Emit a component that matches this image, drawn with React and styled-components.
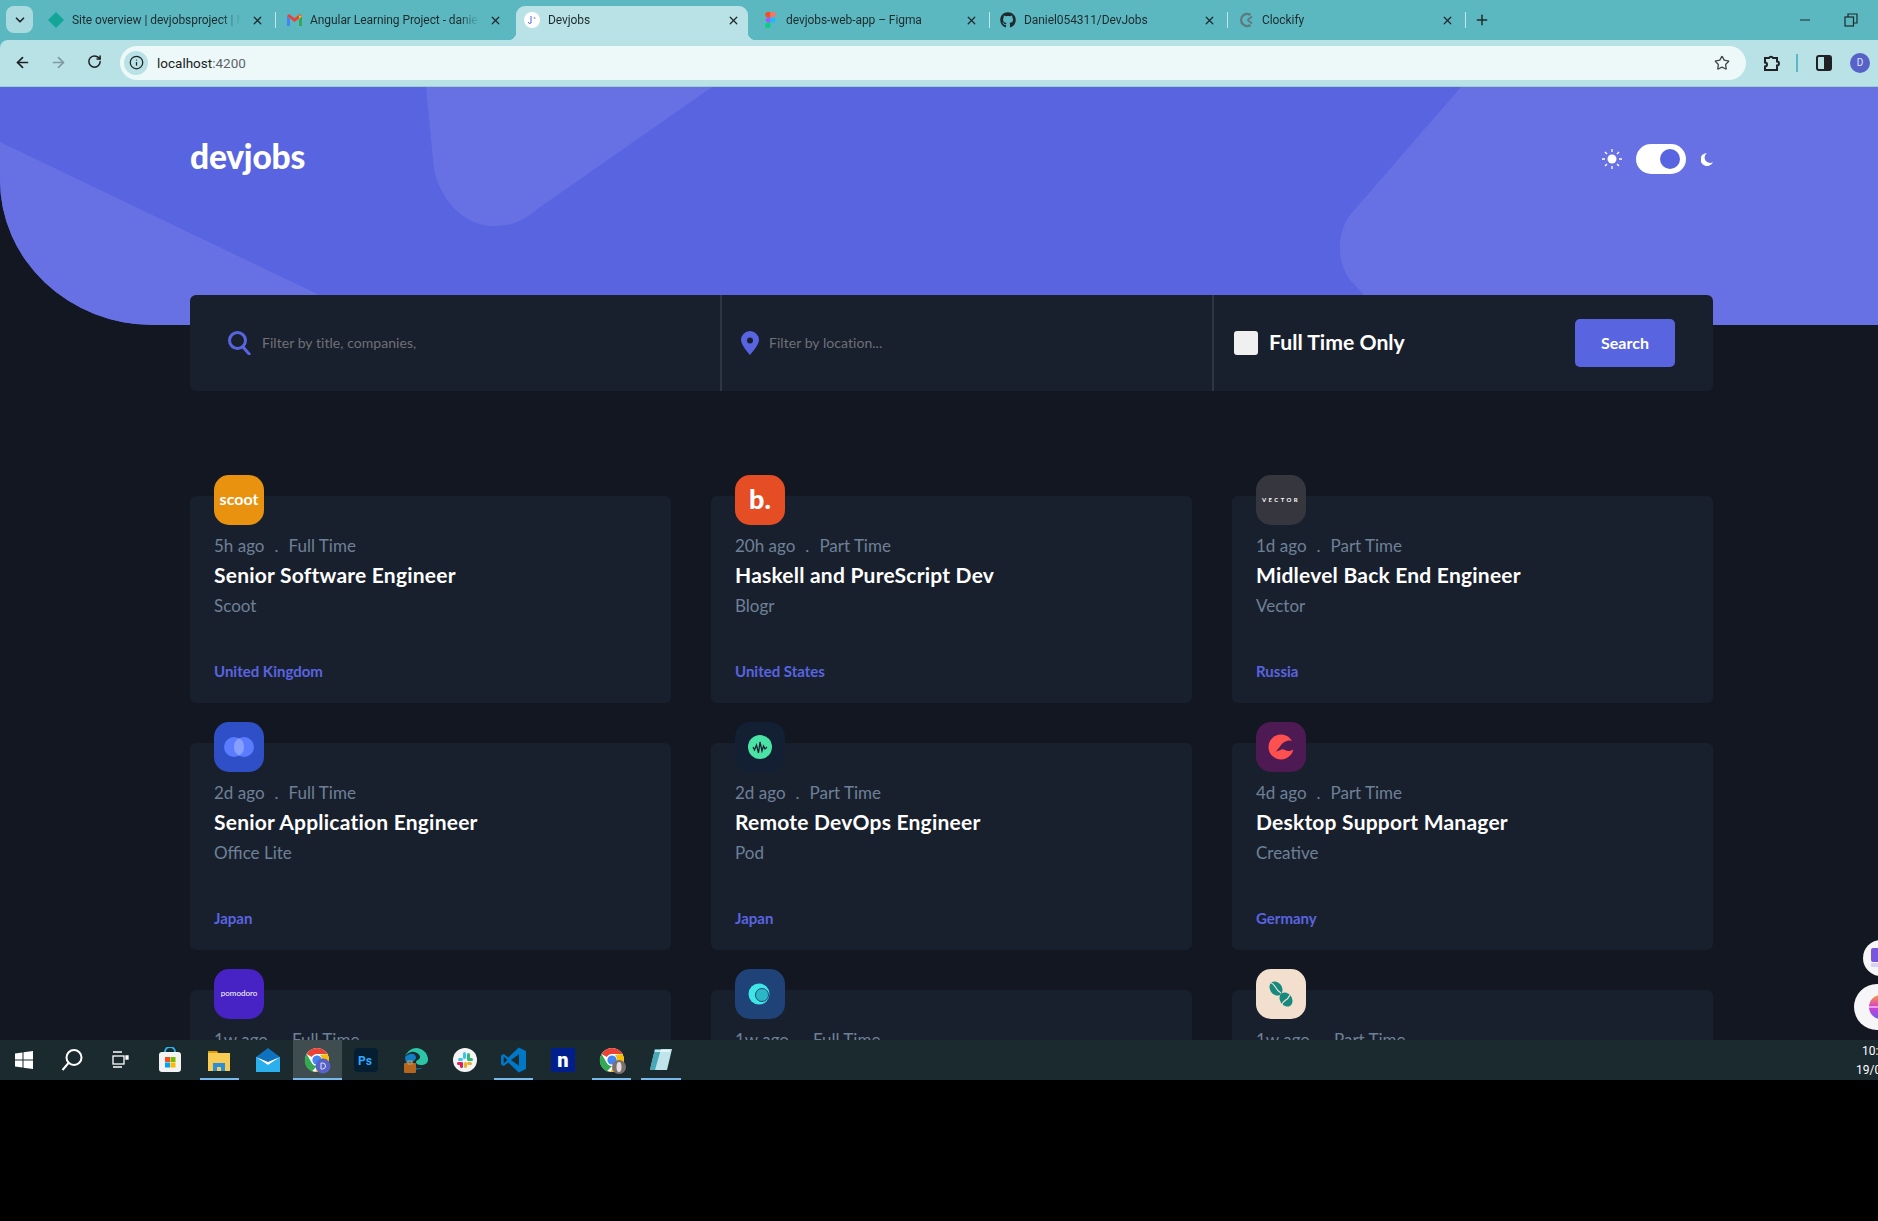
import React from "react";
import styled, { createGlobalStyle, css } from "styled-components";
import { ArrowLeft, ArrowRight, RotateCw, Star, Info, X, Plus, Minus, ChevronDown } from "lucide-react";
import { FaGithub } from "react-icons/fa";

const Global = createGlobalStyle`
  html, body { margin: 0; padding: 0; background: #000; overflow: hidden; }
  * { box-sizing: border-box; }
`;

const Screen = styled.div`
  position: relative;
  width: 1878px;
  height: 1221px;
  background: #000;
  overflow: hidden;
  font-family: "Lato", "Liberation Sans", sans-serif;
`;
const Desktop = styled.div`
  height: 1080px;
  display: flex;
  flex-direction: column;
  background: #5bb8c1;
`;

/* browser chrome */
const TabStrip = styled.div`
  height: 40px;
  flex: none;
  display: flex;
  background: #5bb8c1;
  padding-left: 6px;
  font-family: "Roboto", "Liberation Sans", sans-serif;
  font-size: 12px;
  color: #1f2a2c;
`;
const Switcher = styled.div`
  width: 27px;
  height: 27px;
  margin: 6px 5px 0 0;
  border-radius: 8px;
  background: #a9dadf;
  display: flex;
  align-items: center;
  justify-content: center;
  color: #1f2a2c;
`;
const Tab = styled.div`
  position: relative;
  width: 238px;
  height: 40px;
  padding: 0 11px 0 10px;
  display: flex;
  align-items: center;
  gap: 8px;
  z-index: ${(p) => (p.$active ? 1 : 0)};
  ${(p) =>
    p.$active &&
    css`
      &::before {
        content: "";
        position: absolute;
        inset: 6px 4px 0 2px;
        background: #b8e2e6;
        border-radius: 9px 9px 0 0;
      }
      &::after {
        content: "";
        position: absolute;
        left: -6px;
        right: -4px;
        bottom: 0;
        height: 8px;
        background:
          radial-gradient(circle at 0 0, transparent 8px, #b8e2e6 8.5px) left bottom / 8px 8px no-repeat,
          radial-gradient(circle at 100% 0, transparent 8px, #b8e2e6 8.5px) right bottom / 8px 8px no-repeat;
      }
    `}
  ${(p) =>
    p.$sep &&
    css`
      &::after {
        content: "";
        position: absolute;
        right: 0;
        top: 12px;
        height: 16px;
        width: 1px;
        background: #c3e6e9;
      }
    `}
`;
const TabIcon = styled.span`
  position: relative;
  z-index: 1;
  width: 16px;
  height: 16px;
  flex: none;
  display: flex;
  align-items: center;
  justify-content: center;
`;
const TabTitle = styled.span`
  position: relative;
  z-index: 1;
  flex: 1;
  overflow: hidden;
  white-space: nowrap;
  letter-spacing: -0.07px;
  mask-image: linear-gradient(90deg, #000 88%, transparent 100%);
`;
const TabClose = styled.span`
  position: relative;
  z-index: 1;
  width: 16px;
  flex: none;
  display: flex;
  justify-content: center;
`;
const NewTab = styled.div`
  margin-left: 8px;
  height: 40px;
  display: flex;
  align-items: center;
`;
const WindowButtons = styled.div`
  margin-left: auto;
  display: flex;
  align-items: center;
  gap: 31px;
  padding-right: 20px;
  height: 40px;
`;
const Toolbar = styled.div`
  height: 47px;
  flex: none;
  background: #b8e2e6;
  border-bottom: 1px solid #9fcfcc;
  display: flex;
  align-items: center;
  padding-bottom: 1px;
  border-radius: 8px 0 0 0;
`;
const NavButton = styled.span`
  width: 36px;
  flex: none;
  display: flex;
  justify-content: center;
  color: ${(p) => (p.$off ? "#7f9a9e" : "#202124")};
`;
const NavGroup = styled.div`
  display: flex;
  padding-left: 4px;
  margin-right: 8px;
`;
const Omnibox = styled.div`
  width: 1626px;
  height: 34px;
  flex: none;
  border-radius: 17px;
  background: #ecf9f8;
  display: flex;
  align-items: center;
  padding: 0 16px 0 4px;
  font-family: "Roboto", "Liberation Sans", sans-serif;
  font-size: 13.5px;
  color: #202124;
`;
const InfoDot = styled.span`
  width: 24px;
  height: 24px;
  border-radius: 50%;
  background: #b8e2e6;
  display: flex;
  align-items: center;
  justify-content: center;
  margin-right: 9px;
`;
const Port = styled.span`
  color: #5f6368;
`;
const ToolEnd = styled.div`
  margin-left: auto;
  display: flex;
`;
const Extras = styled.div`
  display: flex;
  align-items: center;
  margin-left: 17px;
  color: #202124;
`;
const ToolSep = styled.span`
  width: 2px;
  height: 18px;
  background: #5bb8c1;
  margin: 0 18px 0 15px;
`;
const Avatar = styled.span`
  width: 20px;
  height: 20px;
  margin-left: 18px;
  border-radius: 50%;
  background: #5762c8;
  color: #dfe3ff;
  font: 10px "Roboto", sans-serif;
  display: flex;
  align-items: center;
  justify-content: center;
`;

/* page */
const Page = styled.main`
  flex: 1;
  min-height: 0;
  overflow: hidden;
  background: #121721;
`;
const Hero = styled.header`
  position: relative;
  height: 238px;
  background: #5964e0;
  border-bottom-left-radius: 153px 145px;
  overflow: hidden;
`;
const HeroArt = styled.svg`
  position: absolute;
  inset: 0;
`;
const HeroBar = styled.div`
  position: relative;
  width: 1523px;
  margin-left: 190px;
  padding-top: 48px;
  display: flex;
  align-items: center;
  justify-content: space-between;
`;
const Brand = styled.h1`
  margin: 0;
  font-size: 33.5px;
  line-height: 42px;
  font-weight: 900;
  color: #fff;
  letter-spacing: -0.2px;
`;
const ThemeSwitch = styled.div`
  display: flex;
  align-items: center;
  margin-top: 6px;
`;
const Track = styled.span`
  width: 50px;
  height: 30px;
  margin: 0 15px 0 14px;
  border-radius: 15px;
  background: #fff;
  display: flex;
  align-items: center;
  justify-content: flex-end;
  padding-right: 6px;
`;
const Knob = styled.span`
  width: 20px;
  height: 20px;
  border-radius: 50%;
  background: #5964e0;
`;
const Content = styled.div`
  width: 1523px;
  margin: -30px 0 0 190px;
  position: relative;
`;
const SearchBar = styled.form`
  height: 96px;
  background: #19202d;
  border-radius: 6px;
  display: grid;
  grid-template-columns: 532px 492px 1fr;
  align-items: stretch;
  margin: 0;
`;
const Field = styled.label`
  display: flex;
  align-items: center;
  gap: ${(p) => p.$gap}px;
  padding-left: ${(p) => p.$pad}px;
  border-right: 2px solid #2f3642;
  font-size: 14px;
  color: #6e7077;
`;
const Placeholder = styled.span`
  font-size: 14px;
  letter-spacing: 0.05px;
  padding-bottom: 2px;
`;
const Filter = styled.div`
  display: flex;
  align-items: center;
  padding: 0 38px 0 20px;
`;
const Check = styled.span`
  width: 24px;
  height: 24px;
  border-radius: 3px;
  background: #f0f0f0;
  margin-right: 11px;
`;
const FilterLabel = styled.span`
  font-size: 21.2px;
  font-weight: 700;
  color: #fff;
  padding-bottom: 2px;
`;
const SearchButton = styled.button`
  margin-left: auto;
  width: 100px;
  height: 48px;
  border: 0;
  padding: 0 0 2px;
  border-radius: 5px;
  background: #5964e0;
  color: #fff;
  font: 700 16px "Lato", sans-serif;
`;
const Grid = styled.section`
  margin-top: 105px;
  display: grid;
  grid-template-columns: repeat(3, 481px);
  column-gap: 40px;
  row-gap: 40px;
`;
const Card = styled.article`
  position: relative;
  height: 207px;
  background: #19202d;
  border-radius: 6px;
  padding: 40px 24px 23px;
  display: flex;
  flex-direction: column;
`;
const LogoBox = styled.span`
  position: absolute;
  top: -21px;
  left: 24px;
  width: 50px;
  height: 50px;
  padding-bottom: ${(p) => p.$lift || 0}px;
  border-radius: 15px;
  background: ${(p) => p.$bg};
  color: #fff;
  display: flex;
  align-items: center;
  justify-content: center;
  font-weight: ${(p) => p.$weight || 700};
  font-size: ${(p) => p.$size || 14}px;
  letter-spacing: ${(p) => p.$track || 0}px;
`;
const Meta = styled.div`
  display: flex;
  gap: 10px;
  font-size: 17px;
  line-height: 20px;
  color: #6e8098;
`;
const Title = styled.h3`
  margin: 7px 0 0;
  font-size: 21px;
  line-height: 24px;
  font-weight: 700;
  letter-spacing: 0.22px;
  color: #fff;
`;
const Company = styled.div`
  margin-top: 9px;
  font-size: 17px;
  line-height: 20px;
  color: #6e8098;
`;
const Location = styled.div`
  margin-top: auto;
  font-size: 15px;
  line-height: 18px;
  font-weight: 700;
  color: #5964e0;
`;

/* taskbar */
const Taskbar = styled.footer`
  height: 40px;
  flex: none;
  background: #1b2a2f;
  display: flex;
  position: relative;
`;
const SysButton = styled.span`
  width: 48px;
  display: flex;
  align-items: center;
  justify-content: center;
  color: #fff;
`;
const Apps = styled.div`
  display: flex;
  margin-left: 1.5px;
`;
const AppSlot = styled.span`
  position: relative;
  width: 49.1px;
  display: flex;
  align-items: center;
  justify-content: center;
  background: ${(p) => (p.$active ? "rgba(255,255,255,.16)" : "transparent")};
  ${(p) =>
    p.$open &&
    css`
      &::after {
        content: "";
        position: absolute;
        bottom: 0;
        left: ${p.$active ? 0 : 5}px;
        right: ${p.$active ? 0 : 5}px;
        height: 2px;
        background: #76b9ed;
      }
    `}
`;
const Clock = styled.div`
  position: absolute;
  right: 0;
  top: 2px;
  width: 24px;
  overflow: hidden;
  white-space: nowrap;
  color: #fff;
  font: 12px/19px "Roboto", sans-serif;
`;
const ClockLine = styled.div`
  margin-left: ${(p) => p.$shift}px;
`;
const Bubble = styled.span`
  position: absolute;
  left: ${(p) => p.$x}px;
  top: ${(p) => p.$y}px;
  width: ${(p) => p.$d}px;
  height: ${(p) => p.$d}px;
  padding-left: ${(p) => p.$nudge || 0}px;
  border-radius: 50%;
  background: #f6f6f8;
  display: flex;
  align-items: center;
  justify-content: center;
`;
const ChromeSvg = styled.svg`
  overflow: visible;
`;

const ChromeLogo = ({ badge }) => (
  <ChromeSvg width={24} height={24} viewBox="0 0 24 24">
    <circle cx="12" cy="12" r="12" fill="#fff" />
    <path d="M12 0a12 12 0 0 1 10.4 6H12a6 6 0 0 0-5.2 3L1.6 6A12 12 0 0 1 12 0z" fill="#ea4335" />
    <path d="M1.6 6l5.2 9a6 6 0 0 0 5.2 3l-5.2 5.4A12 12 0 0 1 1.6 6z" fill="#34a853" />
    <path d="M22.4 6A12 12 0 0 1 10.5 23.9L15 15.6A6 6 0 0 0 15 7z" fill="#fbbc04" />
    <circle cx="12" cy="12" r="4.6" fill="#4285f4" />
    {badge === "d" && <circle cx="18" cy="18" r="7.5" fill="#5762c8" />}
    {badge === "d" && <path d="M16 15h1.5a3 3 0 0 1 0 6H16z" fill="none" stroke="#dfe3ff" strokeWidth="1" />}
    {badge === "p" && <circle cx="19" cy="19" r="7" fill="#7b6f70" />}
    {badge === "p" && <ellipse cx="19" cy="19" rx="2.5" ry="5" fill="#e8dddd" />}
  </ChromeSvg>
);

const Devicon = {
  diamond: <svg width="16" height="16" viewBox="0 0 16 16"><path d="M8 0l8 8-8 8-8-8z" fill="#12a598" /></svg>,
  gmail: (
    <svg width="15" height="12" viewBox="0 0 15 12">
      <path d="M0 2v10h3V5z" fill="#4285f4" />
      <path d="M12 5v7h3V2z" fill="#34a853" />
      <path d="M0 2l7.5 6L15 2 13 0 7.5 4.2 2 0z" fill="#ea4335" />
      <path d="M12 1.2L15 2l-3 3z" fill="#fbbc04" />
    </svg>
  ),
  devjobs: (
    <svg width="16" height="16" viewBox="0 0 16 16">
      <circle cx="8" cy="8" r="8" fill="#fff" />
      <path d="M7 4v7a2 2 0 0 1-3-1" fill="none" stroke="#5964e0" strokeWidth="1" />
      <circle cx="10.5" cy="6" r="1" fill="#9aa2ee" />
    </svg>
  ),
  figma: (
    <svg width="11" height="16" viewBox="0 0 11 16">
      <path d="M5.5 0H3a2.7 2.7 0 0 0 0 5.4h2.5z" fill="#f24e1e" />
      <path d="M5.5 0H8a2.7 2.7 0 0 1 0 5.4H5.5z" fill="#ff7262" />
      <path d="M5.5 5.4H3a2.7 2.7 0 0 0 0 5.3h2.5z" fill="#a259ff" />
      <circle cx="8" cy="8" r="2.7" fill="#1abcfe" />
      <path d="M3 10.7h2.5v2.6A2.7 2.7 0 1 1 3 10.7z" fill="#0acf83" />
    </svg>
  ),
  github: <FaGithub size={16} color="#1f2a2c" />,
  clockify: (
    <svg width="14" height="16" viewBox="0 0 14 16" fill="none">
      <path d="M11.5 3a6 6 0 1 0 0 10" stroke="#5f7a7f" strokeWidth="2.4" />
      <path d="M8.5 8l4.500-3.500M8.5 8l4.500 3.500" stroke="#5f7a7f" strokeWidth="1.8" />
    </svg>
  ),
};

const tabs = [
  { icon: "diamond", title: "Site overview | devjobsproject | Netlify", sep: true },
  { icon: "gmail", title: "Angular Learning Project - daniel@gmail.com" },
  { icon: "devjobs", title: "Devjobs", active: true },
  { icon: "figma", title: "devjobs-web-app – Figma", sep: true },
  { icon: "github", title: "Daniel054311/DevJobs", sep: true },
  { icon: "clockify", title: "Clockify", sep: true },
];

const jobs = [
  { key: "scoot", ago: "5h ago", type: "Full Time", title: "Senior Software Engineer", company: "Scoot", place: "United Kingdom" },
  { key: "blogr", ago: "20h ago", type: "Part Time", title: "Haskell and PureScript Dev", company: "Blogr", place: "United States" },
  { key: "vector", ago: "1d ago", type: "Part Time", title: "Midlevel Back End Engineer", company: "Vector", place: "Russia" },
  { key: "office", ago: "2d ago", type: "Full Time", title: "Senior Application Engineer", company: "Office Lite", place: "Japan" },
  { key: "pod", ago: "2d ago", type: "Part Time", title: "Remote DevOps Engineer", company: "Pod", place: "Japan" },
  { key: "creative", ago: "4d ago", type: "Part Time", title: "Desktop Support Manager", company: "Creative", place: "Germany" },
  { key: "pomodoro", ago: "1w ago", type: "Full Time" },
  { key: "maker", ago: "1w ago", type: "Full Time" },
  { key: "coffee", ago: "1w ago", type: "Part Time" },
];

const Logo = ({ id }) => {
  switch (id) {
    case "scoot":
      return <LogoBox $bg="#e99210" $size={16} $lift={3}>scoot</LogoBox>;
    case "blogr":
      return <LogoBox $bg="#e54d25" $size={27} $weight={900} $lift={3}>b.</LogoBox>;
    case "vector":
      return <LogoBox $bg="#36363f" $size={6} $track={2.4} $lift={2}>VECTOR</LogoBox>;
    case "pomodoro":
      return <LogoBox $bg="#4722c4" $size={8} $weight={400} $lift={2}>pomodoro</LogoBox>;
    case "office":
      return (
        <LogoBox $bg="#2f4fc7">
          <svg width="30" height="20" viewBox="0 0 30 20">
            <circle cx="10" cy="10" r="10" fill="#5c7cff" />
            <circle cx="20" cy="10" r="10" fill="#5c7cff" />
            <path d="M15 1.3a10 10 0 0 1 0 17.4 10 10 0 0 1 0-17.4z" fill="#86a0ff" />
          </svg>
        </LogoBox>
      );
    case "pod":
      return (
        <LogoBox $bg="#132034">
          <svg width="24" height="24" viewBox="0 0 24 24">
            <circle cx="12" cy="12" r="12" fill="#4be3a5" />
            <path d="M5 12l1.5 3 2-5 2 8 1.5-11 2 9 1.5-5 1.5 3 2-2" fill="none" stroke="#132034" strokeWidth="1.3" />
          </svg>
        </LogoBox>
      );
    case "creative":
      return (
        <LogoBox $bg="#4e1a54">
          <svg width="26" height="26" viewBox="0 0 26 26">
            <circle cx="13" cy="13" r="12.5" fill="#ff5050" />
            <path d="M26 7.5C20 5 15 8 12 12.5 10 15 9 16.5 7.5 17.500 12 17 14 14 17 16c3 2 6 1 9-1z" fill="#4e1a54" />
          </svg>
        </LogoBox>
      );
    case "maker":
      return (
        <LogoBox $bg="#1f4379">
          <svg width="24" height="24" viewBox="0 0 24 24">
            <circle cx="11" cy="12" r="10.5" fill="#3ee6e6" />
            <circle cx="14" cy="13" r="6.5" fill="#2bb8c6" stroke="#1f4379" strokeWidth="1" />
          </svg>
        </LogoBox>
      );
    case "coffee":
      return (
        <LogoBox $bg="#f2dfce">
          <svg width="26" height="28" viewBox="0 0 26 28">
            <ellipse cx="8" cy="8.5" rx="6" ry="7.5" transform="rotate(-35 8 8.5)" fill="#168a7f" />
            <ellipse cx="18" cy="19.5" rx="6" ry="7.5" transform="rotate(-35 18 19.5)" fill="#168a7f" />
            <path d="M3 3c5 1 3 6 10 10M14 25c0-5 5-3 8-10" fill="none" stroke="#f2dfce" strokeWidth="1.2" />
          </svg>
        </LogoBox>
      );
    default:
      return null;
  }
};

const taskApps = [
  {
    icon: (
      <svg width="24" height="26" viewBox="0 0 24 26">
        <path d="M7 5a5 5 0 0 1 10 0" fill="none" stroke="#2bb3ee" strokeWidth="2" />
        <rect x="1" y="5" width="22" height="20" rx="3" fill="#f3f3f3" />
        <rect x="7" y="10" width="5" height="5" fill="#f25022" />
        <rect x="12.5" y="10" width="5" height="5" fill="#7fba00" />
        <rect x="7" y="15.5" width="5" height="5" fill="#00a4ef" />
        <rect x="12.5" y="15.5" width="5" height="5" fill="#ffb900" />
      </svg>
    ),
  },
  {
    open: true,
    icon: (
      <svg width="24" height="24" viewBox="0 0 24 24">
        <path d="M1 3h9l2 3H1z" fill="#e0a100" />
        <rect x="1" y="5" width="22" height="18" fill="#f6cc55" />
        <path d="M6 23v-8h12v8h-4v-4h-4v4z" fill="#2a8fd8" />
      </svg>
    ),
  },
  {
    icon: (
      <svg width="24" height="24" viewBox="0 0 24 24">
        <path d="M0 9l12-9 12 9v15H0z" fill="#0f72bf" />
        <path d="M0 9l12 8 12-8v15H0z" fill="#2bb0ee" />
        <path d="M0 9l12 8 12-8-12 5z" fill="#fff" />
      </svg>
    ),
  },
  { open: true, active: true, icon: <ChromeLogo badge="d" /> },
  {
    icon: (
      <svg width="24" height="24" viewBox="0 0 24 24">
        <rect width="24" height="24" rx="4" fill="#061e31" />
        <text x="4" y="17" fontFamily="Roboto, sans-serif" fontWeight="700" fontSize="12" fill="#31a8ff">Ps</text>
      </svg>
    ),
  },
  {
    icon: (
      <svg width="24" height="26" viewBox="0 0 24 26">
        <path d="M12 1a12 12 0 0 1 12 12c0 3-3 5-7 5-3 0-5-1-5-3s4-2 4-5c0-3-5-6-9-5S2 8 1 10A12 12 0 0 1 12 1z" fill="#2cc5a7" />
        <path d="M1 10c3-4 11-5 11 1 0 2-4 3-4 6 0 4 6 6 12 3a12 12 0 0 1-19-10z" fill="#0f7ec6" />
        <rect x="0" y="16" width="12" height="10" rx="1" fill="#b5651d" />
        <rect x="4" y="14" width="4" height="3" fill="none" stroke="#d89b4a" />
      </svg>
    ),
  },
  {
    icon: (
      <svg width="24" height="24" viewBox="0 0 24 24">
        <circle cx="12" cy="12" r="12" fill="#f5f5f5" />
        <rect x="10" y="4" width="3" height="7" rx="1.5" fill="#36c5f0" />
        <rect x="5" y="10" width="5" height="3" rx="1.5" fill="#36c5f0" />
        <rect x="14" y="5" width="3" height="7" rx="1.5" fill="#2eb67d" />
        <rect x="14" y="10" width="6" height="3" rx="1.5" fill="#2eb67d" />
        <rect x="11" y="14" width="3" height="6" rx="1.5" fill="#ecb22e" />
        <rect x="14" y="14" width="5" height="3" rx="1.5" fill="#ecb22e" />
        <rect x="7" y="14" width="3" height="6" rx="1.5" fill="#e01e5a" />
        <rect x="4" y="14" width="6" height="3" rx="1.5" fill="#e01e5a" />
      </svg>
    ),
  },
  {
    open: true,
    icon: (
      <svg width="25" height="26" viewBox="0 0 100 100">
        <path d="M71 0l29 14v72L71 100 29 60 11 74 0 68V32l11-6 18 14z" fill="#0078c8" />
        <path d="M72 27L40 50l32 23z" fill="#1b2a2f" />
        <path d="M11 36v28l14-14z" fill="#1b2a2f" />
      </svg>
    ),
  },
  {
    icon: (
      <svg width="24" height="24" viewBox="0 0 24 24">
        <rect width="24" height="24" fill="#001e8c" />
        <text x="12" y="19" textAnchor="middle" fontFamily="Roboto, sans-serif" fontWeight="900" fontSize="20" fill="#fff">n</text>
      </svg>
    ),
  },
  { open: true, icon: <ChromeLogo badge="p" /> },
  {
    open: true,
    icon: (
      <svg width="24" height="24" viewBox="0 0 24 24">
        <path d="M6 1h17l-5 21H1z" fill="#bfe5ea" />
        <path d="M3 13L6 1h6L6 22H1z" fill="#49a8b5" />
        <path d="M6 3h15" stroke="#f0f8fa" strokeWidth="1.5" />
      </svg>
    ),
  },
];

export default function App() {
  return (
    <Screen>
      <Global />
      <Desktop>
        <TabStrip>
          <Switcher>
            <ChevronDown size={14} strokeWidth={3} />
          </Switcher>
          {tabs.map((t) => (
            <Tab key={t.icon} $active={t.active} $sep={t.sep}>
              <TabIcon>{Devicon[t.icon]}</TabIcon>
              <TabTitle>{t.title}</TabTitle>
              <TabClose>
                <X size={13} strokeWidth={2.4} />
              </TabClose>
            </Tab>
          ))}
          <NewTab>
            <Plus size={16} strokeWidth={2.2} />
          </NewTab>
          <WindowButtons>
            <Minus size={16} strokeWidth={1.5} />
            <svg width="14" height="14" viewBox="0 0 14 14" fill="none" stroke="#1f2a2c" strokeWidth="1.2">
              <rect x="1" y="4" width="8.5" height="9" />
              <path d="M4 4V1h9v9h-3.500" />
            </svg>
          </WindowButtons>
        </TabStrip>
        <Toolbar>
          <NavGroup>
            <NavButton>
              <ArrowLeft size={17} strokeWidth={2.4} />
            </NavButton>
            <NavButton $off>
              <ArrowRight size={17} strokeWidth={2.4} />
            </NavButton>
            <NavButton>
              <RotateCw size={15} strokeWidth={2.4} />
            </NavButton>
          </NavGroup>
          <Omnibox>
            <InfoDot>
              <Info size={15} strokeWidth={2} />
            </InfoDot>
            localhost<Port>:4200</Port>
            <ToolEnd>
              <Star size={16} strokeWidth={2} color="#44494c" />
            </ToolEnd>
          </Omnibox>
          <Extras>
            <svg width="18" height="18" viewBox="0 0 18 18" fill="#c7e6e8" stroke="#202124" strokeWidth="2">
              <path d="M2 4h4a2.2 2.2 0 0 1 4 0h4v3.5a2 2 0 0 1 0 4V16H2v-3.500a2 2 0 0 0 0-4z" />
            </svg>
            <ToolSep />
            <svg width="16" height="16" viewBox="0 0 16 16">
              <rect x="1" y="1" width="14" height="14" rx="2" fill="none" stroke="#202124" strokeWidth="2" />
              <rect x="8" y="1" width="7" height="14" fill="#202124" />
            </svg>
            <Avatar>D</Avatar>
          </Extras>
        </Toolbar>
        <Page>
          <Hero>
            <HeroArt width="1878" height="238" viewBox="0 87 1878 238" fill="#6771e4">
              <path d="M0 142L382 325H0z" />
              <path d="M426 87h286L536 210c-14 12-26 16-41 16-35 0-55-30-61-56z" />
              <path d="M1461 87L1350 215c-13 17-14 46 0 65l14 15 60 30h454V87z" />
            </HeroArt>
            <HeroBar>
              <Brand>devjobs</Brand>
              <ThemeSwitch>
                <svg width="20" height="20" viewBox="0 0 20 20" fill="#fff" stroke="#fff">
                  <circle cx="10" cy="10" r="4.5" stroke="none" />
                  <path d="M10 0v3M10 17v3M0 10h3M17 10h3M3 3l2 2M15 15l2 2M3 17l2-2M15 5l2-2" strokeWidth="1.3" fill="none" />
                </svg>
                <Track>
                  <Knob />
                </Track>
                <svg width="12" height="13" viewBox="0 0 12 13">
                  <path d="M6 0a6.5 6.5 0 1 0 6 9A5 5 0 0 1 6 0z" fill="#fff" />
                </svg>
              </ThemeSwitch>
            </HeroBar>
          </Hero>
          <Content>
            <SearchBar>
              <Field $pad={38} $gap={10}>
                <svg width="24" height="24" viewBox="0 0 24 24" fill="none" stroke="#5964e0" strokeWidth="3">
                  <circle cx="9.5" cy="9.5" r="8" />
                  <path d="M15 16l7 8" />
                </svg>
                <Placeholder>Filter by title, companies,</Placeholder>
              </Field>
              <Field $pad={19} $gap={10}>
                <svg width="18" height="24" viewBox="0 0 18 24">
                  <path d="M9 0a9 9 0 0 1 9 9c0 5-9 15-9 15S0 14 0 9a9 9 0 0 1 9-9zm0 6.5a3 3 0 1 0 0 6 3 3 0 0 0 0-6z" fill="#5964e0" fillRule="evenodd" />
                </svg>
                <Placeholder>Filter by location...</Placeholder>
              </Field>
              <Filter>
                <Check />
                <FilterLabel>Full Time Only</FilterLabel>
                <SearchButton type="button">Search</SearchButton>
              </Filter>
            </SearchBar>
            <Grid>
              {jobs.map((j) => (
                <Card key={j.key}>
                  <Logo id={j.key} />
                  <Meta>
                    <span>{j.ago}</span>
                    <span>.</span>
                    <span>{j.type}</span>
                  </Meta>
                  {j.title && <Title>{j.title}</Title>}
                  {j.company && <Company>{j.company}</Company>}
                  {j.place && <Location>{j.place}</Location>}
                </Card>
              ))}
            </Grid>
          </Content>
        </Page>
        <Taskbar>
          <SysButton>
            <svg width="18" height="18" viewBox="0 0 18 18" fill="#fff">
              <path d="M0 2.5l7.5-1v7H0zM8.5 1.3L18 0v8.5H8.500zM0 9.5h7.5v7l-7.5-1zM8.5 9.5H18V18l-9.5-1.3z" />
            </svg>
          </SysButton>
          <SysButton>
            <svg width="24" height="24" viewBox="0 0 24 24" fill="none" stroke="#fff" strokeWidth="2">
              <circle cx="14" cy="9.5" r="7.5" />
              <path d="M8.5 15L2.5 22" />
            </svg>
          </SysButton>
          <SysButton>
            <svg width="18" height="18" viewBox="0 0 18 18" fill="none" stroke="#fff" strokeWidth="1.3">
              <path d="M2 1h9M2 16h9" />
              <rect x="2" y="5" width="11" height="8" />
              <path d="M15 5h2v3h-2z" fill="#fff" />
            </svg>
          </SysButton>
          <Apps>
            {taskApps.map((a, i) => (
              <AppSlot key={i} $open={a.open} $active={a.active}>
                {a.icon}
              </AppSlot>
            ))}
          </Apps>
          <Clock>
            <ClockLine $shift={8}>10:1</ClockLine>
            <ClockLine $shift={2}>19/0</ClockLine>
          </Clock>
        </Taskbar>
      </Desktop>
      <Bubble $x={1863} $y={940} $d={36}>
        <svg width="20" height="20" viewBox="0 0 20 20">
          <rect x="0" y="0" width="20" height="14" rx="2" fill="#7a55e0" />
          <rect x="0" y="15" width="20" height="4" rx="1" fill="#d9d0f7" />
        </svg>
      </Bubble>
      <Bubble $x={1854} $y={984} $d={46} $nudge={8}>
        <svg width="24" height="24" viewBox="0 0 24 24">
          <defs>
            <linearGradient id="orb" x1="0" y1="0" x2="0" y2="1">
              <stop offset="0" stopColor="#f59a3c" />
              <stop offset=".5" stopColor="#d63fd0" />
              <stop offset="1" stopColor="#6a5cf0" />
            </linearGradient>
          </defs>
          <circle cx="12" cy="12" r="12" fill="url(#orb)" />
          <path d="M0 12h24" stroke="#fff" strokeWidth="1" />
        </svg>
      </Bubble>
    </Screen>
  );
}
